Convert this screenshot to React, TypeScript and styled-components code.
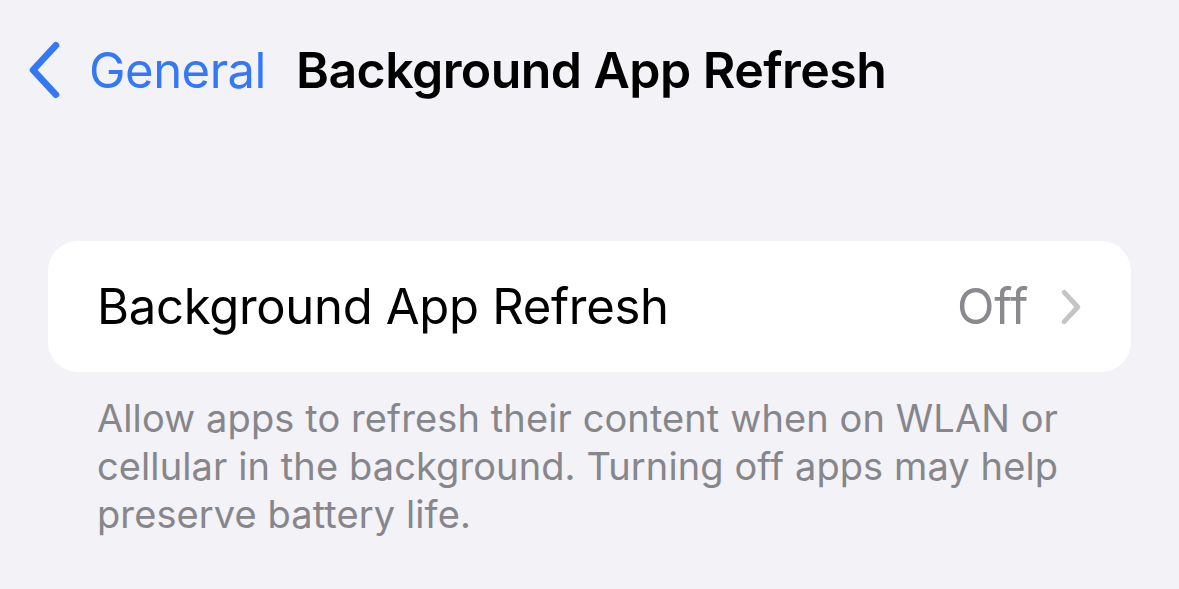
import styled, { createGlobalStyle } from 'styled-components';

const GlobalStyle = createGlobalStyle`
  html, body {
    margin: 0;
    padding: 0;
    background: #f2f2f7;
  }

  body {
    font-family: Inter, "Noto Sans", sans-serif;
    -webkit-font-smoothing: antialiased;
  }
`;

const Screen = styled.div`
  width: 1179px;
  height: 589px;
  background: #f2f2f7;
  overflow: hidden;
`;

const NavBar = styled.div`
  display: flex;
  align-items: center;
  height: 60px;
  padding: 40px 0 0 26px;
`;

const BackButton = styled.button`
  display: flex;
  align-items: center;
  gap: 26px;
  border: 0;
  padding: 0;
  background: none;
  color: #3478f6;
  font-family: inherit;
  font-size: 49px;
  letter-spacing: -0.5px;
  cursor: pointer;
`;

const Title = styled.h1`
  margin: 0 0 0 30px;
  font-size: 50px;
  font-weight: 600;
  letter-spacing: -0.55px;
  color: #000;
`;

const Section = styled.section`
  margin: 141px 48px 0;
`;

const Card = styled.div`
  background: #fff;
  border-radius: 30px;
`;

const Row = styled.div`
  display: flex;
  align-items: center;
  height: 131px;
  padding: 0 49px;
  font-size: 49px;
  letter-spacing: -0.3px;
`;

const RowLabel = styled.span`
  flex: 1;
  color: #000;
`;

const RowValue = styled.span`
  color: #8a8a8e;
  margin-right: 32px;
`;

const Footer = styled.p`
  margin: 22px 0 0;
  padding: 0 49px;
  font-size: 38px;
  line-height: 48px;
  color: #86868b;
  letter-spacing: 0.1px;
`;

type ChevronProps = {
  dir: 'left' | 'right';
  color: string;
  width: number;
  height: number;
  weight: number;
};

function Chevron ({ dir, color, width, height, weight }: ChevronProps) {
  const d = dir === 'left' ? 'M 17 3 L 4 17 L 17 31' : 'M 4 3 L 17 17 L 4 31';
  return (
    <svg width={width} height={height} viewBox="0 0 21 34" fill="none">
      <path d={d} stroke={color} strokeWidth={weight} strokeLinecap="round" strokeLinejoin="round" />
    </svg>
  );
}

function App () {
  return (
    <Screen>
      <GlobalStyle />
      <NavBar>
        <BackButton>
          <Chevron dir="left" color="#3478f6" width={37} height={60} weight={3.8} />
          General
        </BackButton>
        <Title>Background App Refresh</Title>
      </NavBar>

      <Section>
        <Card>
          <Row>
            <RowLabel>Background App Refresh</RowLabel>
            <RowValue>Off</RowValue>
            <Chevron dir="right" color="#c4c4c7" width={22} height={36} weight={4.6} />
          </Row>
        </Card>
        <Footer>
          Allow apps to refresh their content when on WLAN or cellular in the background. Turning off apps may help preserve battery life.
        </Footer>
      </Section>
    </Screen>
  );
}

export default App;
